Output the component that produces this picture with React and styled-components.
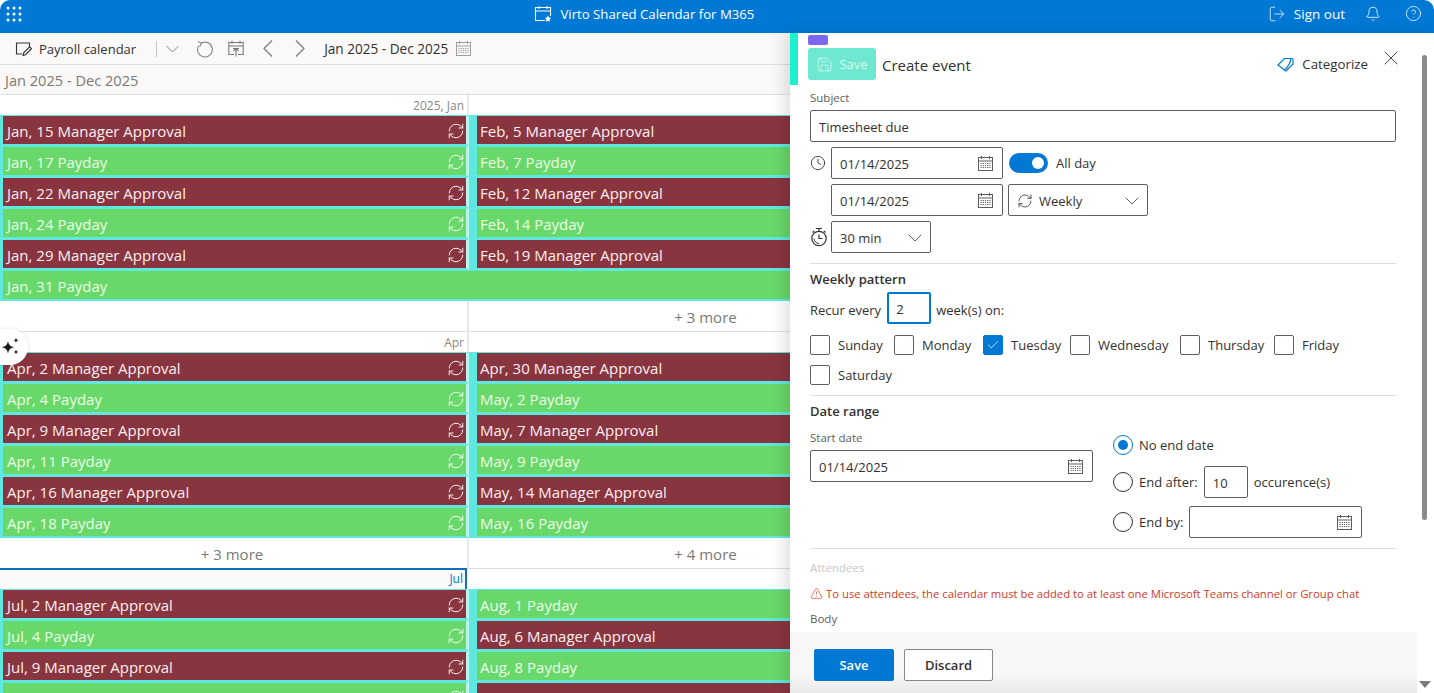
import React from 'react';
import styled, { createGlobalStyle } from 'styled-components';
import {
  Bell, Check, ChevronDown, CircleHelp, Clock, LogOut, RefreshCw, Save, TriangleAlert, X,
} from 'lucide-react';

const GlobalStyle = createGlobalStyle`
  html, body {
    margin: 0;
    height: 100%;
    background: #fff;
    overflow: hidden;
  }
  body {
    font-family: "Open Sans", "Liberation Sans", sans-serif;
    color: #323130;
  }
  * { box-sizing: border-box; }
`;

const Page = styled.div`
  width: 1434px;
  height: 693px;
  display: flex;
  flex-direction: column;
  overflow: hidden;
  position: relative;
`;

const TopBar = styled.header`
  height: 33px;
  flex: none;
  background: #0078d4;
  border-radius: 10px 10px 0 0;
  color: #fff;
  display: flex;
  align-items: center;
  padding: 0 12px 6px 6px;
  font-size: 13.5px;
`;

const Title = styled.div`
  flex: 1;
  display: flex;
  justify-content: center;
  align-items: center;
  gap: 8px;
  margin-left: 14px;
  margin-right: 15px;
  font-size: 13.2px;
`;

const TopAction = styled.div`
  display: flex;
  align-items: center;
  gap: 8px;
  margin-left: ${(p) => p.$gap || 0}px;
`;

const Main = styled.div`
  flex: 1;
  display: flex;
  min-height: 0;
`;

const CalendarPane = styled.section`
  width: 790px;
  flex: none;
  overflow: hidden;
  position: relative;
`;

const Toolbar = styled.div`
  height: 32px;
  background: #faf9f8;
  border-bottom: 1px solid #e1dfdd;
  display: flex;
  align-items: center;
  padding-left: 15px;
  font-size: 13px;
  color: #323130;
`;

const ToolItem = styled.span`
  display: inline-flex;
  align-items: center;
  margin-left: ${(p) => p.$left || 0}px;
  font-size: ${(p) => p.$size || 13}px;
`;

const Separator = styled.span`
  width: 1px;
  height: 16px;
  background: #c8c6c4;
  margin-left: 20px;
`;

const SubBar = styled.div`
  height: 29px;
  background: #faf9f8;
  display: flex;
  align-items: center;
  padding-left: 5px;
  font-size: 14.6px;
  color: #7a7876;
`;

const Section = styled.div`
  border-top: 1px solid #e1dfdd;
`;

const Row = styled.div`
  display: grid;
  grid-template-columns: 469px 473px;
  height: ${(p) => p.$h}px;
`;

const MonthCell = styled.div`
  display: flex;
  justify-content: flex-end;
  align-items: center;
  padding-right: ${(p) => (p.$active ? '2px' : '3px')};
  font-size: 12px;
  color: ${(p) => (p.$active ? '#0078d4' : '#8a8886')};
  background: ${(p) => (p.$active ? '#faf9f8' : '#fff')};
  border-right: 2px solid ${(p) => (p.$active ? '#106ebe' : '#e8e8e8')};
  box-shadow: ${(p) => (p.$active ? 'inset 0 2px 0 #106ebe' : 'none')};
  margin-top: ${(p) => (p.$active ? '-1px' : '0')};
  margin-right: ${(p) => (p.$active ? '2px' : '0')};
`;

const BlankCell = styled.div`
  background: #fff;
`;

const Event = styled.div`
  grid-column: ${(p) => (p.$span ? '1 / span 2' : 'auto')};
  display: flex;
  align-items: center;
  justify-content: space-between;
  padding: 1px 1px 0 ${(p) => (p.$second ? '3px' : '4px')};
  background: ${(p) => (p.$kind === 'pay' ? '#69d86a' : '#89353f')};
  color: ${(p) => (p.$kind === 'pay' ? '#ecfce8' : '#fbeff0')};
  border-style: solid;
  border-color: #5ee8df;
  border-right-color: #bdf3ee;
  border-width: 1px ${(p) => (p.$second || p.$span ? '0' : '3px')} 2px ${(p) => (p.$second ? '8px' : '3px')};
  font-size: 15px;
  white-space: nowrap;
`;

const MoreCell = styled.div`
  display: flex;
  align-items: center;
  justify-content: center;
  padding: 1px ${(p) => (p.$first ? '3px' : '0')} 0 0;
  font-size: 15px;
  color: #7a7876;
  border-right: ${(p) => (p.$first ? '2px solid #e8e8e8' : '0')};
`;

const AiButton = styled.button`
  position: absolute;
  left: -4px;
  top: 296px;
  width: 32px;
  height: 36px;
  border: 0;
  border-radius: 0 18px 18px 0;
  background: #fff;
  box-shadow: 0 0 4px rgba(0, 0, 0, 0.12);
  padding: 0 0 0 4px;
  display: flex;
  align-items: center;
`;

const Panel = styled.aside`
  width: 644px;
  flex: none;
  background: #fff;
  display: flex;
  flex-direction: column;
  position: relative;
  box-shadow: -6px 0 14px rgba(0, 0, 0, 0.12);
`;

const PanelHead = styled.div`
  height: 52px;
  flex: none;
  display: flex;
`;

const Strip = styled.div`
  width: 8px;
  background: #1ef0cf;
`;

const HeadStack = styled.div`
  margin-left: 10px;
  padding-top: 2px;
  display: flex;
  flex-direction: column;
  gap: 3px;
`;

const Pill = styled.div`
  width: 20px;
  height: 10px;
  border-radius: 2px;
  background: #7b68ee;
`;

const GhostSave = styled.div`
  width: 68px;
  height: 32px;
  border-radius: 3px;
  background: #6ee8d0;
  color: #d9faf3;
  display: flex;
  align-items: center;
  justify-content: center;
  gap: 6px;
  font-size: 13px;
`;

const HeadTitle = styled.div`
  margin: 22px 0 0 6px;
  font-size: 15px;
  line-height: 20px;
  color: #323130;
`;

const Categorize = styled.div`
  margin: 21px 0 0 auto;
  height: 20px;
  display: flex;
  align-items: center;
  gap: 8px;
  font-size: 13.3px;
  color: #323130;
`;

const CloseButton = styled.div`
  margin: 13px 31px 0 11px;
  height: 24px;
  color: #323130;
`;

const Form = styled.div`
  flex: 1;
  min-height: 0;
  overflow: hidden;
  padding: 5px 38px 0 20px;
`;

const Label = styled.div`
  font-size: 11.5px;
  line-height: 16px;
  color: ${(p) => p.$color || '#605e5c'};
  margin-top: ${(p) => p.$top || 0}px;
  margin-bottom: ${(p) => p.$bottom || 0}px;
`;

const Field = styled.div`
  width: ${(p) => (p.$w ? `${p.$w}px` : '100%')};
  height: 32px;
  flex: none;
  border: ${(p) => (p.$focus ? '2px solid #0078d4' : '1px solid #605e5c')};
  border-radius: 2px;
  display: flex;
  align-items: center;
  justify-content: space-between;
  padding: ${(p) => (p.$focus ? '2px 7px 0' : '1px 8px 0')};
  margin-left: ${(p) => p.$left || 0}px;
  font-size: 13px;
  color: #323130;
  background: #fff;
`;

const FieldText = styled.span`
  display: inline-flex;
  align-items: center;
  gap: 6px;
`;

const Caret = styled(ChevronDown)`
  margin-right: -5px;
  flex: none;
`;

const IconRow = styled.div`
  display: flex;
  align-items: center;
  margin-top: 5px;
  padding-left: ${(p) => p.$indent || 0}px;
`;

const IconSlot = styled.span`
  width: 21px;
  flex: none;
  display: inline-flex;
  color: #323130;
`;

const Toggle = styled.div`
  width: 39px;
  height: 20px;
  border-radius: 10px;
  background: #0078d4;
  margin-left: 6px;
  display: flex;
  justify-content: flex-end;
  align-items: center;
  padding-right: 4px;
  &::after {
    content: '';
    width: 12px;
    height: 12px;
    border-radius: 50%;
    background: #fff;
  }
`;

const Text = styled.span`
  font-size: 13px;
  line-height: 20px;
  color: #323130;
  margin-left: ${(p) => p.$left || 0}px;
  margin-right: ${(p) => p.$right || 0}px;
  padding-top: ${(p) => p.$drop || 0}px;
  white-space: nowrap;
`;

const Divider = styled.hr`
  border: 0;
  height: 1px;
  background: #e1dfdd;
  margin: ${(p) => p.$top}px 0 0;
`;

const Heading = styled.div`
  font-size: 13px;
  font-weight: 600;
  line-height: 20px;
  margin-top: ${(p) => p.$top}px;
  color: #323130;
`;

const RecurRow = styled.div`
  display: flex;
  align-items: center;
  margin-top: 3px;
`;

const Days = styled.div`
  display: flex;
  flex-wrap: wrap;
  row-gap: 10px;
  margin-top: 11px;
`;

const Day = styled.label`
  width: ${(p) => p.$w}px;
  height: 20px;
  display: flex;
  align-items: center;
  gap: 8px;
  font-size: 13px;
`;

const Box = styled.span`
  width: 20px;
  height: 20px;
  border-radius: 2px;
  border: 1px solid ${(p) => (p.$on ? '#0078d4' : '#605e5c')};
  background: ${(p) => (p.$on ? '#0078d4' : '#fff')};
  color: #fff;
  display: inline-flex;
  align-items: center;
  justify-content: center;
`;

const RangeGrid = styled.div`
  display: grid;
  grid-template-columns: 283px 1fr;
  column-gap: 20px;
  margin-top: 9px;
`;

const RadioColumn = styled.div`
  display: flex;
  flex-direction: column;
  padding-top: 5px;
`;

const RadioRow = styled.div`
  display: flex;
  align-items: center;
  height: ${(p) => p.$h}px;
  margin-top: ${(p) => p.$top || 0}px;
  gap: 6px;
`;

const Radio = styled.span`
  width: 20px;
  height: 20px;
  flex: none;
  border-radius: 50%;
  border: 1px solid ${(p) => (p.$on ? '#0078d4' : '#323130')};
  display: inline-flex;
  align-items: center;
  justify-content: center;
  &::after {
    content: '';
    width: 10px;
    height: 10px;
    border-radius: 50%;
    background: ${(p) => (p.$on ? '#0078d4' : 'transparent')};
  }
`;

const Warning = styled.div`
  display: flex;
  align-items: center;
  gap: 3px;
  height: 16px;
  margin-top: 9px;
  font-size: 11.3px;
  color: #d13a1f;
  white-space: nowrap;
`;

const Footer = styled.div`
  height: 61px;
  flex: none;
  width: 627px;
  padding: 17px 0 0 24px;
  display: flex;
  align-items: flex-start;
  gap: 10px;
  background: linear-gradient(#f8f7f6 70%, #e9e9e9);
`;

const FooterButton = styled.button`
  height: 32px;
  width: ${(p) => p.$w}px;
  border-radius: 2px;
  font: 600 13px "Open Sans", "Liberation Sans", sans-serif;
  color: ${(p) => (p.$primary ? '#fff' : '#323130')};
  background: ${(p) => (p.$primary ? '#0078d4' : '#fff')};
  border: 1px solid ${(p) => (p.$primary ? '#0078d4' : '#8a8886')};
`;

const ScrollThumb = styled.div`
  position: absolute;
  left: 632px;
  top: 22px;
  width: 5px;
  height: 465px;
  border-radius: 3px;
  background: #8a8a8a;
`;

const ScrollArrow = styled.div`
  position: absolute;
  left: 629px;
  bottom: 5px;
  width: 0;
  height: 0;
  border-left: 6px solid transparent;
  border-right: 6px solid transparent;
  border-top: 7px solid #7a7a7a;
`;

const Waffle = () => (
  <svg width="16" height="16" viewBox="0 0 16 16" fill="#fff">
    {[2, 8, 14].map((y) => [2, 8, 14].map((x) => <circle key={`${x}-${y}`} cx={x} cy={y} r="1.5" />))}
  </svg>
);

const CalGrid = ({ size = 17, color = '#605e5c' }) => (
  <svg width={size} height={size} viewBox="0 0 17 17" fill="none" stroke={color} strokeWidth="1">
    <rect x="1.5" y="2.5" width="14" height="13" />
    <path d="M1.5 6h14M4.5 1v3M12.5 1v3" />
    <path d="M3.5 8.5h10M3.5 10.5h10M3.5 12.5h10" strokeDasharray="1.2 1" />
  </svg>
);

const TitleIcon = () => (
  <svg width="18" height="18" viewBox="0 0 18 18" fill="none" stroke="#fff" strokeWidth="1.1">
    <path d="M11 15.5H1.5v-13h15V11M1.5 6h15M5 1v3M13 1v3" />
    <path d="M14 10.5l1 2.1 2.2.4-1.6 1.5.4 2.3-2-1.1-2 1.1.4-2.3-1.6-1.5 2.2-.4z" fill="#fff" stroke="none" />
  </svg>
);

const NoteIcon = () => (
  <svg width="17" height="16" viewBox="0 0 17 16" fill="none" stroke="#323130" strokeWidth="1.1">
    <path d="M7 13H1.5V2h13v4" />
    <path d="M8 14.5l.7-2.6 6-6 1.8 1.8-6 6z" />
  </svg>
);

const RefreshIcon = () => (
  <svg width="18" height="18" viewBox="0 0 18 18" fill="none" stroke="#8a8886" strokeWidth="1.1">
    <path d="M5.2 3.2a7.4 7.4 0 1 1-2.4 2.3" />
    <path d="M1.8 1.6L5.4 3.3 3.7 6.8" />
  </svg>
);

const UploadCalIcon = () => (
  <svg width="16" height="17" viewBox="0 0 16 17" fill="none" stroke="#7a7876" strokeWidth="1.1">
    <path d="M6 14.5H.8V2.5h14.4v12H10M.8 6h14.4M4 .8v3M12 .8v3" />
    <path d="M8 16.5V9M5.5 11L8 8.5 10.5 11M5 8.500h6" />
  </svg>
);

const ThinDown = () => (
  <svg width="13" height="8" viewBox="0 0 13 8" fill="none" stroke="#8a8886" strokeWidth="1">
    <path d="M.5 1l6 6 6-6" />
  </svg>
);

const ThinSide = ({ flip }) => (
  <svg width="10" height="17" viewBox="0 0 10 17" fill="none" stroke="#7a7876" strokeWidth="1.1">
    <path d={flip ? 'M1 .5l8 8-8 8' : 'M9 .5l-8 8 8 8'} />
  </svg>
);

const TagIcon = () => (
  <svg width="17" height="15" viewBox="0 0 17 15" fill="none" stroke="#0078d4" strokeWidth="1.2">
    <path d="M1 8l6.5-6.5H15a1 1 0 0 1 1 1V7l-6.500 6.500a1 1 0 0 1-1.400 0L1 8z" />
    <path d="M13.5 1.5c1 2-2 8-6 11.500" />
  </svg>
);

const StopwatchIcon = () => (
  <svg width="18" height="20" viewBox="0 0 18 20" fill="none" stroke="#323130" strokeWidth="1.2">
    <circle cx="9" cy="11.5" r="7.2" />
    <path d="M6 1.5h6M9 1.5v2.800M2.500 5.500l1.700-1.500M15.500 5.500l-1.700-1.500" />
    <path d="M9 7.5v4h3.500" />
    <path d="M4 11.5a5 5 0 0 0 5 5" strokeWidth="1" />
  </svg>
);

const Sparkle = () => (
  <svg width="22" height="22" viewBox="0 0 22 22" fill="#1b1a19">
    <path d="M8 5c.8 4 2.2 5.4 6.2 6.2C10.2 12 8.8 13.4 8 17.6 7.2 13.4 5.8 12 1.6 11.2 5.8 10.4 7.2 9 8 5z" />
    <path d="M16 1.5c.3 1.800 1 2.500 2.800 2.800-1.800.3-2.500 1-2.800 2.800-.3-1.800-1-2.500-2.800-2.800 1.800-.3 2.500-1 2.800-2.800z" />
    <path d="M16 13.5c.3 1.600.9 2.200 2.500 2.500-1.600.3-2.200.9-2.500 2.500-.3-1.600-.9-2.200-2.500-2.500 1.600-.3 2.200-.9 2.500-2.500z" />
  </svg>
);

const MA = 'Manager Approval';
const PD = 'Payday';
const ev = (date, title) => ({ date, title, kind: title === PD ? 'pay' : 'mgr' });

const sections = [
  {
    label: '2025, Jan',
    rows: [
      [ev('Jan, 15', MA), ev('Feb, 5', MA)],
      [ev('Jan, 17', PD), ev('Feb, 7', PD)],
      [ev('Jan, 22', MA), ev('Feb, 12', MA)],
      [ev('Jan, 24', PD), ev('Feb, 14', PD)],
      [ev('Jan, 29', MA), ev('Feb, 19', MA)],
      [ev('Jan, 31', PD)],
    ],
    more: [null, '+ 3 more'],
  },
  {
    label: 'Apr',
    rows: [
      [ev('Apr, 2', MA), ev('Apr, 30', MA)],
      [ev('Apr, 4', PD), ev('May, 2', PD)],
      [ev('Apr, 9', MA), ev('May, 7', MA)],
      [ev('Apr, 11', PD), ev('May, 9', PD)],
      [ev('Apr, 16', MA), ev('May, 14', MA)],
      [ev('Apr, 18', PD), ev('May, 16', PD)],
    ],
    more: ['+ 3 more', '+ 4 more'],
  },
  {
    label: 'Jul',
    active: true,
    rows: [
      [ev('Jul, 2', MA), ev('Aug, 1', PD)],
      [ev('Jul, 4', PD), ev('Aug, 6', MA)],
      [ev('Jul, 9', MA), ev('Aug, 8', PD)],
      [ev('Jul, 11', PD), ev('Aug, 13', MA)],
    ],
  },
];

const days = [
  ['Sunday', 84], ['Monday', 89], ['Tuesday', 87, true], ['Wednesday', 110], ['Thursday', 94], ['Friday', 100], ['Saturday', 100],
];

const EventBar = ({ item, second, span }) => (
  <Event $kind={item.kind} $second={second} $span={span}>
    <span>{item.date} {item.title}</span>
    {!span && <RefreshCw size={18} strokeWidth={1.2} color="#fff" />}
  </Event>
);

const App = () => (
  <Page>
    <GlobalStyle />
    <TopBar>
      <Waffle />
      <Title><TitleIcon />Virto Shared Calendar for M365</Title>
      <TopAction><LogOut size={18} strokeWidth={1} />Sign out</TopAction>
      <TopAction $gap={20}><Bell size={16} strokeWidth={1.2} /></TopAction>
      <TopAction $gap={24}><CircleHelp size={17} strokeWidth={1.1} /></TopAction>
    </TopBar>
    <Main>
      <CalendarPane>
        <Toolbar>
          <NoteIcon />
          <ToolItem $left={7}>Payroll calendar</ToolItem>
          <Separator />
          <ToolItem $left={9}><ThinDown /></ToolItem>
          <ToolItem $left={17}><RefreshIcon /></ToolItem>
          <ToolItem $left={14}><UploadCalIcon /></ToolItem>
          <ToolItem $left={19}><ThinSide /></ToolItem>
          <ToolItem $left={22}><ThinSide flip /></ToolItem>
          <ToolItem $left={19} $size={13.6}>Jan 2025 - Dec 2025</ToolItem>
          <ToolItem $left={7}><CalGrid color="#a19f9d" /></ToolItem>
        </Toolbar>
        <SubBar>Jan 2025 - Dec 2025</SubBar>
        {sections.map((s) => (
          <Section key={s.label}>
            <Row $h={20}>
              <MonthCell $active={s.active}>{s.label}</MonthCell>
              <BlankCell />
            </Row>
            {s.rows.map((r) => (
              <Row $h={31} key={r[0].date}>
                <EventBar item={r[0]} span={r.length === 1} />
                {r[1] && <EventBar item={r[1]} second />}
              </Row>
            ))}
            {s.more && (
              <Row $h={30}>
                <MoreCell $first>{s.more[0]}</MoreCell>
                <MoreCell>{s.more[1]}</MoreCell>
              </Row>
            )}
          </Section>
        ))}
        <AiButton aria-label="Copilot"><Sparkle /></AiButton>
      </CalendarPane>
      <Panel>
        <PanelHead>
          <Strip />
          <HeadStack>
            <Pill />
            <GhostSave><Save size={17} strokeWidth={1.1} />Save</GhostSave>
          </HeadStack>
          <HeadTitle>Create event</HeadTitle>
          <Categorize><TagIcon />Categorize</Categorize>
          <CloseButton><X size={24} strokeWidth={0.9} /></CloseButton>
        </PanelHead>
        <Form>
          <Label $bottom={4}>Subject</Label>
          <Field>Timesheet due</Field>
          <IconRow>
            <IconSlot><Clock size={16} strokeWidth={1.3} /></IconSlot>
            <Field $w={172}>01/14/2025<CalGrid /></Field>
            <Toggle />
            <Text $left={8}>All day</Text>
          </IconRow>
          <IconRow $indent={21}>
            <Field $w={172}>01/14/2025<CalGrid /></Field>
            <Field $w={140} $left={5}>
              <FieldText><RefreshCw size={16} strokeWidth={1.2} />Weekly</FieldText>
              <Caret size={24} strokeWidth={0.8} />
            </Field>
          </IconRow>
          <IconRow>
            <IconSlot><StopwatchIcon /></IconSlot>
            <Field $w={100}>30 min<Caret size={24} strokeWidth={0.8} /></Field>
          </IconRow>
          <Divider $top={10} />
          <Heading $top={5}>Weekly pattern</Heading>
          <RecurRow>
            <Text $right={6} $drop={3}>Recur every</Text>
            <Field $w={44} $focus>2</Field>
            <Text $left={5} $drop={3}>week(s) on:</Text>
          </RecurRow>
          <Days>
            {days.map(([name, w, on]) => (
              <Day key={name} $w={w}>
                <Box $on={on}>{on && <Check size={14} strokeWidth={1.3} />}</Box>
                {name}
              </Day>
            ))}
          </Days>
          <Divider $top={10} />
          <Heading $top={5}>Date range</Heading>
          <RangeGrid>
            <div>
              <Label $bottom={4}>Start date</Label>
              <Field>01/14/2025<CalGrid /></Field>
            </div>
            <RadioColumn>
              <RadioRow $h={20}><Radio $on /><Text>No end date</Text></RadioRow>
              <RadioRow $h={32} $top={11}>
                <Radio /><Text>End after:</Text>
                <Field $w={44}>10</Field>
                <Text>occurence(s)</Text>
              </RadioRow>
              <RadioRow $h={32} $top={8}>
                <Radio /><Text>End by:</Text>
                <Field $w={173}><span /><CalGrid /></Field>
              </RadioRow>
            </RadioColumn>
          </RangeGrid>
          <Divider $top={10} />
          <Label $top={11} $color="#c8c6c4">Attendees</Label>
          <Warning><TriangleAlert size={13} strokeWidth={1.2} />To use attendees, the calendar must be added to at least one Microsoft Teams channel or Group chat</Warning>
          <Label $top={10}>Body</Label>
        </Form>
        <Footer>
          <FooterButton $primary $w={80}>Save</FooterButton>
          <FooterButton $w={89}>Discard</FooterButton>
        </Footer>
        <ScrollThumb />
        <ScrollArrow />
      </Panel>
    </Main>
  </Page>
);

export default App;
